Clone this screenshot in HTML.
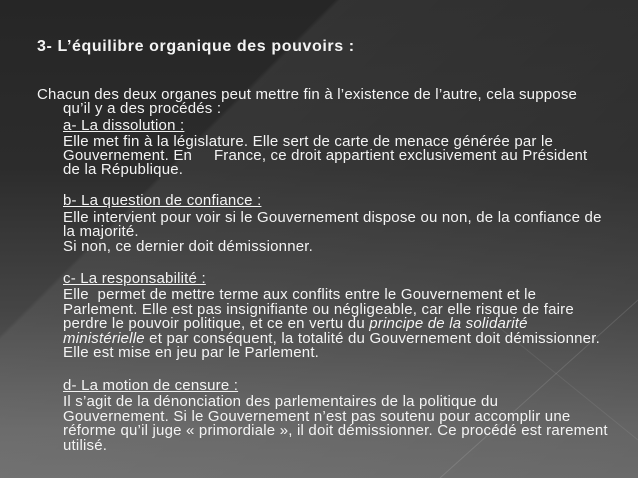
<!DOCTYPE html>
<html><head><meta charset="utf-8"><style>
html,body{margin:0;padding:0}
body{width:638px;height:478px;overflow:hidden;position:relative;
background:linear-gradient(to bottom,#262626 0%,#2c2c2c 35%,#454545 65%,#646464 90%,#6a6a6a 100%);
font-family:"Liberation Sans",sans-serif;color:#f4f4f4}
.band{position:absolute;left:0;top:0;width:638px;height:478px;
background:linear-gradient(135deg,rgba(255,255,255,0) 0%,rgba(255,255,255,0) 30%,rgba(255,255,255,0.06) 30.5%,rgba(255,255,255,0.04) 60%,rgba(255,255,255,0) 100%)}
.l{position:absolute;white-space:nowrap;font-size:15px;line-height:16px;letter-spacing:0.2px}
u{text-decoration:underline}
.t{font-weight:bold;font-size:16px;letter-spacing:0.6px;left:37px;top:39px}
</style></head><body>
<div class="band"></div>
<svg width="638" height="478" style="position:absolute;left:0;top:0">
<line x1="638" y1="300" x2="440" y2="478" stroke="rgba(255,255,255,0.12)" stroke-width="1"/>
<line x1="490" y1="320" x2="638" y2="440" stroke="rgba(255,255,255,0.08)" stroke-width="1"/>
</svg>
<div class="l t">3- L’équilibre organique des pouvoirs :</div>
<div class="l" style="left:37px;top:87px">Chacun des deux organes peut mettre fin à l’existence de l’autre, cela suppose</div>
<div class="l" style="left:63px;top:101px">qu’il y a des procédés :</div>
<div class="l" style="left:63px;top:118px"><u>a- La dissolution :</u></div>
<div class="l" style="left:63px;top:134px">Elle met fin à la législature. Elle sert de carte de menace générée par le</div>
<div class="l" style="left:63px;top:148px">Gouvernement. En &nbsp;&nbsp;&nbsp;&nbsp;France, ce droit appartient exclusivement au Président</div>
<div class="l" style="left:63px;top:162px">de la République.</div>
<div class="l" style="left:63px;top:193px"><u>b- La question de confiance :</u></div>
<div class="l" style="left:63px;top:210px">Elle intervient pour voir si le Gouvernement dispose ou non, de la confiance de</div>
<div class="l" style="left:63px;top:224px">la majorité.</div>
<div class="l" style="left:63px;top:239px">Si non, ce dernier doit démissionner.</div>
<div class="l" style="left:63px;top:271px"><u>c- La responsabilité :</u></div>
<div class="l" style="left:63px;top:287px">Elle &nbsp;permet de mettre terme aux conflits entre le Gouvernement et le</div>
<div class="l" style="left:63px;top:302px">Parlement. Elle est pas insignifiante ou négligeable, car elle risque de faire</div>
<div class="l" style="left:63px;top:316px">perdre le pouvoir politique, et ce en vertu du <i>principe de la solidarité</i></div>
<div class="l" style="left:63px;top:331px"><i>ministérielle</i> et par conséquent, la totalité du Gouvernement doit démissionner.</div>
<div class="l" style="left:63px;top:345px">Elle est mise en jeu par le Parlement.</div>
<div class="l" style="left:63px;top:378px"><u>d- La motion de censure :</u></div>
<div class="l" style="left:63px;top:394px">Il s’agit de la dénonciation des parlementaires de la politique du</div>
<div class="l" style="left:63px;top:409px">Gouvernement. Si le Gouvernement n’est pas soutenu pour accomplir une</div>
<div class="l" style="left:63px;top:423px">réforme qu’il juge « primordiale », il doit démissionner. Ce procédé est rarement</div>
<div class="l" style="left:63px;top:438px">utilisé.</div>
</body></html>
